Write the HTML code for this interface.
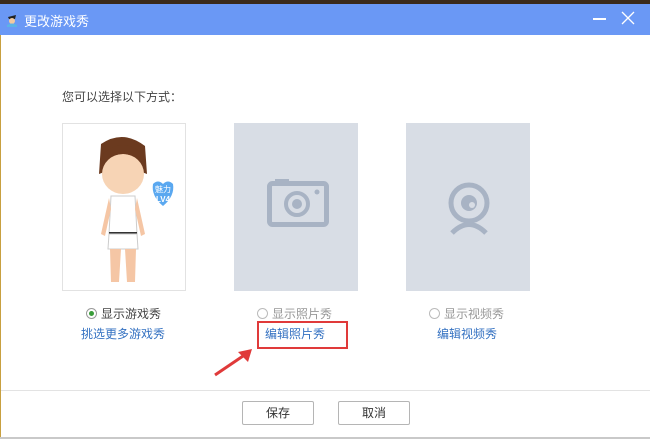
<!DOCTYPE html>
<html><head><meta charset="utf-8"><style>
*{margin:0;padding:0;box-sizing:border-box}
body{width:650px;height:439px;overflow:hidden;background:#fff;font-family:"Liberation Sans","Noto Sans CJK SC",sans-serif;font-size:12px;color:#333;position:relative}
.top{position:absolute;left:0;top:0;width:650px;height:4px;background:#3a2a1c}
.bar{position:absolute;left:0;top:4px;width:650px;height:31px;background:#6a98f5;color:#fff}
.bar .t{position:absolute;left:24px;top:7px;font-size:13px}
.a{position:absolute}
.box{position:absolute;top:123px;width:124px;height:168px;background:#d8dde5}
.rad{position:absolute;top:305px;font-size:12px;color:#999;white-space:nowrap}
.rad i{display:inline-block;width:11px;height:11px;border:1px solid #bbb;border-radius:50%;vertical-align:-1px;margin-right:4px;background:#fff;position:relative}
.lk{position:absolute;top:325px;color:#3572c2;font-size:12px;white-space:nowrap}
.btn{position:absolute;top:401px;width:72px;height:24px;border:1px solid #b5b5b5;border-radius:2px;text-align:center;line-height:22px;font-size:12px;color:#333;background:#fff}
</style></head><body>
<div class="top"></div>
<div class="bar">
<svg class="a" style="left:5px;top:7px" width="14" height="16"><path d="M3 6 L11 4 L10 8 L4 8Z" fill="#222"/><circle cx="7" cy="10" r="3" fill="#f2c9a0"/><path d="M2 14 Q7 11 12 14 L12 16 L2 16Z" fill="#5bb3e6"/></svg>
<span class="t">更改游戏秀</span>
<div class="a" style="left:593px;top:14px;width:13px;height:2px;background:#fff"></div>
<svg class="a" style="left:621px;top:7px" width="14" height="14"><path d="M1 1L13 13M13 1L1 13" stroke="#fff" stroke-width="1.3"/></svg>
</div>
<div class="a" style="left:0;top:35px;width:1px;height:404px;background:#c8a040"></div>
<div class="a" style="left:62px;top:88px;font-size:12px;color:#444">您可以选择以下方式：</div>

<div class="a" style="left:62px;top:123px;width:124px;height:168px;border:1px solid #e2e2e2;background:#fff">
<svg width="122" height="166">
<path d="M38 20 Q60 5 82 22 L84 50 Q60 40 36 50Z" fill="#6b3a1f"/>
<ellipse cx="60" cy="50" rx="21" ry="20" fill="#f7d4b5"/>
<path d="M38 40 Q60 20 82 40 L80 30 Q60 12 40 30Z" fill="#6b3a1f"/>
<path d="M48 72 L72 72 L74 110 L46 110Z" fill="#fff" stroke="#ccc"/>
<rect x="46" y="108" width="28" height="2" fill="#333"/>
<path d="M46 110 L74 110 L75 125 L45 125Z" fill="#fff" stroke="#ccc"/>
<path d="M47 125 L58 125 L56 158 L48 158Z M62 125 L73 125 L72 158 L64 158Z" fill="#f5c6a5"/>
<path d="M46 74 L38 110 L42 112 L48 85Z M74 74 L82 110 L78 112 L72 85Z" fill="#f5c6a5"/>
<path d="M90 60 Q95 55 100 60 Q105 55 110 60 Q112 72 100 82 Q88 72 90 60Z" fill="#5aa8f0"/>
<text x="100" y="68" font-size="8" fill="#fff" text-anchor="middle" font-family="Noto Sans CJK SC">魅力</text>
<text x="100" y="78" font-size="8" fill="#fff" text-anchor="middle" font-weight="bold">LV4</text>
</svg></div>

<div class="box" style="left:234px">
<svg class="a" style="left:33px;top:56px" width="62" height="48"><rect x="2.5" y="4.5" width="57" height="41" rx="3" fill="none" stroke="#a8b3c4" stroke-width="5"/><rect x="8" y="0" width="14" height="4" fill="#a8b3c4"/><circle cx="30" cy="25" r="11" fill="none" stroke="#a8b3c4" stroke-width="4"/><circle cx="30" cy="25" r="5" fill="#a8b3c4"/><circle cx="50" cy="13" r="2.5" fill="#a8b3c4"/></svg>
</div>
<div class="box" style="left:406px">
<svg class="a" style="left:41px;top:59px" width="44" height="54"><circle cx="22" cy="21" r="18" fill="none" stroke="#a8b3c4" stroke-width="5"/><circle cx="22" cy="21" r="8" fill="#a8b3c4"/><circle cx="25" cy="23" r="3" fill="#d8dde5"/><path d="M5 51 Q22 34 39 51" fill="none" stroke="#a8b3c4" stroke-width="5"/></svg>
</div>

<div class="rad" style="left:86px;color:#444"><i style="border-color:#999"><b style="position:absolute;left:2px;top:2px;width:5px;height:5px;border-radius:50%;background:#3a9d3a"></b></i>显示游戏秀</div>
<div class="rad" style="left:257px"><i></i>显示照片秀</div>
<div class="rad" style="left:429px"><i></i>显示视频秀</div>
<div class="lk" style="left:81px">挑选更多游戏秀</div>
<div class="lk" style="left:265px">编辑照片秀</div>
<div class="lk" style="left:437px">编辑视频秀</div>
<div class="a" style="left:257px;top:321px;width:91px;height:28px;border:2px solid #e03a3a"></div>
<svg class="a" style="left:210px;top:345px" width="45" height="35"><path d="M5 30 L36 9" stroke="#e03a3a" stroke-width="3"/><path d="M42 4 L28 7 L38 17Z" fill="#e03a3a"/></svg>

<div class="a" style="left:1px;top:390px;width:649px;height:1px;background:#e3e3e3"></div>
<div class="btn" style="left:242px">保存</div>
<div class="btn" style="left:338px">取消</div>
<div class="a" style="left:0;top:437px;width:650px;height:2px;background:#c9c9c9"></div>
</body></html>
